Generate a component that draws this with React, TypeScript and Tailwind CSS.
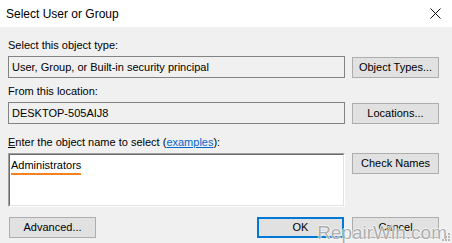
import React from 'react'

const ui = { fontFamily: '"Liberation Sans", Arial, sans-serif' }

function Btn({ children, primary = false, className = '' }: { children: React.ReactNode; primary?: boolean; className?: string }) {
  return (
    <div
      className={
        'flex h-[21px] w-[87px] shrink-0 items-center justify-center bg-[#e1e1e1] text-[11px] text-black ' +
        (primary ? 'border-2 border-[#0078d7] ' : 'border border-[#adadad] ') +
        className
      }
    >
      {children}
    </div>
  )
}

export default function App() {
  return (
    <div className="relative flex h-[243px] w-[452px] flex-col overflow-hidden bg-[#f0f0f0]" style={ui}>
      {/* title bar */}
      <div className="flex h-[27px] shrink-0 items-center justify-between bg-white pl-[6px] pr-[11px]">
        <span className="text-[12px] text-black">Select User or Group</span>
        <svg width="11" height="11" viewBox="0 0 11 11" aria-hidden="true">
          <path d="M0.5 0.5L10.5 10.5M10.5 0.5L0.5 10.5" stroke="#111" strokeWidth="1" />
        </svg>
      </div>

      <div className="flex flex-col pl-[8px] pr-[13px] text-[11px] text-black">
        <div className="mt-[12px] h-[13px] leading-[13px]">Select this object type:</div>
        <div className="mt-[4px] flex items-center gap-[7px]">
          <div className="flex h-[22px] flex-1 items-center border border-[#838383] bg-[#f0f0f0] pl-[3px]">
            User, Group, or Built-in security principal
          </div>
          <Btn>Object Types...</Btn>
        </div>

        <div className="mt-[7px] h-[13px] leading-[13px]">From this location:</div>
        <div className="mt-[4px] flex items-center gap-[7px]">
          <div className="flex h-[22px] flex-1 items-center border border-[#838383] bg-[#f0f0f0] pl-[3px]">
            DESKTOP-505AIJ8
          </div>
          <Btn>Locations...</Btn>
        </div>

        <div className="mt-[12px] h-[13px] leading-[13px]">
          <span className="underline">E</span>nter the object name to select (
          <span className="text-[#0066cc] underline">examples</span>):
        </div>
        <div className="mt-[4px] flex items-start gap-[7px]">
          <div className="h-[54px] flex-1 border border-t-[#a0a0a0] border-l-[#a0a0a0] border-b-white border-r-white">
            <div className="h-full border border-t-[#696969] border-l-[#696969] border-b-[#e3e3e3] border-r-[#e3e3e3] bg-white pl-[1px] pt-[2px]">
              <span className="inline-block border-b-2 border-[#f58220] pb-[1px] leading-[13px]">Administrators</span>
            </div>
          </div>
          <Btn>Check Names</Btn>
        </div>

        <div className="mt-[10px] flex items-center">
          <Btn className="ml-[1px]">Advanced...</Btn>
          <div className="flex-1" />
          <Btn primary className="mr-[8px] w-[72px]">OK</Btn>
          <Btn className="w-[72px]">Cancel</Btn>
        </div>
      </div>

      {/* watermark */}
      <div className="pointer-events-none absolute bottom-[1px] right-[5px] text-[19px] leading-[19px] text-[rgba(140,140,140,0.7)] [text-shadow:1px_0_0_rgba(255,255,255,0.55),-1px_0_0_rgba(255,255,255,0.55),0_1px_0_rgba(255,255,255,0.55),0_-1px_0_rgba(255,255,255,0.55)]">
        RepairWin.com
      </div>

      {/* resize grip */}
      <svg className="absolute bottom-[1px] right-[1px]" width="10" height="10" viewBox="0 0 10 10" aria-hidden="true">
        <rect x="7" y="1" width="2" height="2" fill="#b8b8b8" />
        <rect x="4" y="4" width="2" height="2" fill="#b8b8b8" />
        <rect x="7" y="4" width="2" height="2" fill="#b8b8b8" />
        <rect x="1" y="7" width="2" height="2" fill="#b8b8b8" />
        <rect x="4" y="7" width="2" height="2" fill="#b8b8b8" />
        <rect x="7" y="7" width="2" height="2" fill="#b8b8b8" />
      </svg>
    </div>
  )
}
